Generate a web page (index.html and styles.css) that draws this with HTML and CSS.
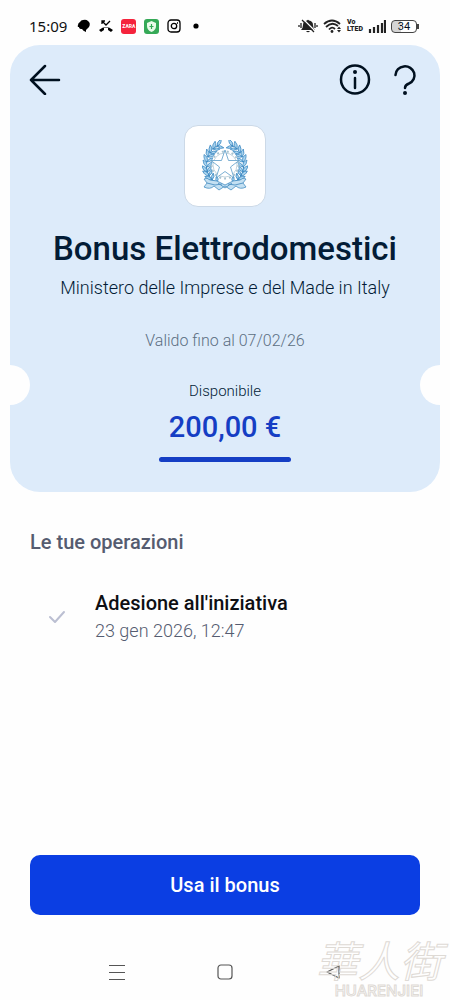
FILE: index.html
```html
<!DOCTYPE html>
<html lang="it">
<head>
    <meta charset="UTF-8">
    <meta name="viewport" content="width=device-width, initial-scale=1.0">
    <title>Bonus Elettrodomestici</title>
    <link rel="stylesheet" href="styles.css">
</head>
<body>
    <div class="status-bar">
        <span class="time">15:09</span>
        <div class="status-left">
            <svg width="14" height="14" viewBox="0 0 14 14"><path d="M3 3Q4 1 6 1Q9 0 11 2Q14 4 12 8Q10 10 9 11L9 13Q6 12 5 10Q2 10 2 8Q0 8 1 6Q1 4 3 3Z"/></svg>
            <svg width="14" height="14" viewBox="0 0 14 14"><path d="M0 11Q7 5 14 11L12 13L9 11V9Q7 8 5 9V11L2 13Z"/><path d="M3 5V2H6M3 2L7 6L11 2" fill="none" stroke="#000" stroke-width="1.3"/></svg>
            <span class="app-icon">ZARA</span>
            <svg width="15" height="15" viewBox="0 0 15 15"><rect width="15" height="15" rx="3" fill="#35a957"/><path d="M7.5 2L12 4V7Q12 11 7.5 13Q3 11 3 7V4Z" fill="#e9fbe9"/><path d="M7.5 5V10M5.5 7.5H9.5" stroke="#35a957" stroke-width="1.2"/></svg>
            <svg width="14" height="14" viewBox="0 0 14 14" fill="none" stroke="#000" stroke-width="1.3"><rect x="1" y="1" width="12" height="12" rx="3"/><circle cx="7" cy="7" r="2.7"/><path d="M10 4H11"/></svg>
            <svg width="14" height="14" viewBox="0 0 14 14"><circle cx="7" cy="7" r="2.6"/></svg>
        </div>
        <div class="status-right">
            <svg width="20" height="14" viewBox="0 0 20 14"><path d="M3 11Q5 9 5 6Q5 2 9 1.500Q10 0 11 1.500Q15 2 15 6Q15 9 17 11ZM8 12H12Q10 14.500 8 12Z" fill="#222"/><path d="M5 0L18 13" stroke="#fff" stroke-width="1.4"/><path d="M4 1L16 13M3 4V9M1 6V8M17 4V9M19 6V8" stroke="#222" stroke-width="1.3"/></svg>
            <svg width="19" height="14" viewBox="0 0 19 14"><path d="M1 5Q9-2 17 5M3 8Q9 2 15 7M6 10.500Q9 7 12 10" fill="none" stroke="#222" stroke-width="1.8"/><circle cx="9" cy="12.500" r="1.4" fill="#222"/><path d="M14 10L16 7.5L18 10ZM14 11L16 13.5L18 11Z" fill="#222"/></svg>
            <span class="volte"><span>Vo</span><span>LTED</span></span>
            <svg width="18" height="13" viewBox="0 0 18 13"><path d="M2 9V13M6 7V13M10 5V13M14 3V13M17 0V13" stroke="#222" stroke-width="2.2"/></svg>
            <span class="battery">34</span>
        </div>
    </div>

    <main>
        <section class="bonus-card">
            <nav class="top-nav">
                <button type="button" class="icon-btn" aria-label="Indietro">
                    <svg width="32" height="32" viewBox="0 0 32 32"><path d="M30 17H2M16 3L2 17L16 31"/></svg>
                </button>
                <button type="button" class="icon-btn push" aria-label="Informazioni">
                    <svg width="32" height="32" viewBox="0 0 32 32"><circle cx="16" cy="16.5" r="14"/><path d="M16 15V25"/><circle class="dot" cx="16" cy="9" r="2"/></svg>
                </button>
                <button type="button" class="icon-btn" aria-label="Aiuto">
                    <svg width="32" height="32" viewBox="0 0 32 32"><path d="M6.5 12A9.5 9 0 1 1 20 20.500Q16 22 16 25"/><circle class="dot" cx="16" cy="30" r="2"/></svg>
                </button>
            </nav>

            <div class="logo">
                <svg width="46" height="52" viewBox="0 0 46 52" fill="none" stroke="#3d86bd">
                    <defs>
                        <path id="leaf" d="M0 0Q-4-2-4-7Q1-5 0 0Q1-4 5-5Q5-1 0 0" fill="#a9d4ef" stroke="#3685c0" stroke-width=".7"/>
                        <g id="branch">
                            <path d="M22 46Q4 41 4 24Q4 10 17 5" stroke-width="1"/>
                            <use href="#leaf" transform="translate(15 6) rotate(60)"/>
                            <use href="#leaf" transform="translate(11 9) rotate(45)"/>
                            <use href="#leaf" transform="translate(8 13) rotate(32)"/>
                            <use href="#leaf" transform="translate(6 17) rotate(20)"/>
                            <use href="#leaf" transform="translate(5 22) rotate(8)"/>
                            <use href="#leaf" transform="translate(5 27)"/>
                            <use href="#leaf" transform="translate(5 32) rotate(-10)"/>
                            <use href="#leaf" transform="translate(7 36) rotate(-22)"/>
                            <use href="#leaf" transform="translate(10 40) rotate(-35)"/>
                            <use href="#leaf" transform="translate(15 43) rotate(-48)"/>
                        </g>
                    </defs>
                    <use href="#branch"/>
                    <use href="#branch" transform="translate(46 0) scale(-1 1)"/>
                    <circle cx="23" cy="25" r="12" stroke="#a9c3d0" stroke-width=".7"/>
                    <circle cx="23" cy="25" r="13.5" stroke="#a9c3d0" stroke-width="2" stroke-dasharray="2 3"/>
                    <path d="M23 10L26.5 20.500H37L28.5 27L32 38L23 31.500L14 38L17.5 27L9 20.500H19.500Z" fill="#fff" stroke="#5a9cc8" stroke-width=".8"/>
                    <path d="M2 39Q5 37 8 40L15 41L23 45L31 41L38 40Q41 37 44 39L41 43L44 47Q38 50 34 46L29 50L23 46L17 50L12 46Q8 50 2 47L5 43Z" fill="#c4e0f2" stroke="#478fc3" stroke-width=".8"/>
                    <path d="M5 43L13 45L20 44M41 43L33 45L26 44M16 43L23 48L30 43" stroke-width=".8"/>
                </svg>
            </div>

            <h1>Bonus Elettrodomestici</h1>
            <p class="issuer">Ministero delle Imprese e del Made in Italy</p>
            <p class="validity">Valido fino al 07/02/26</p>
            <p class="label">Disponibile</p>
            <p class="amount">200,00 €</p>
            <div class="amount-bar"></div>
        </section>

        <section class="operations">
            <h2>Le tue operazioni</h2>
            <div class="operation">
                <svg width="18" height="14" viewBox="0 0 18 14"><path d="M2 7L7 12L16 2" fill="none" stroke="#bbbfd2" stroke-width="2" stroke-linecap="round" stroke-linejoin="round"/></svg>
                <div>
                    <h3>Adesione all'iniziativa</h3>
                    <p>23 gen 2026, 12:47</p>
                </div>
            </div>
        </section>

        <button type="button" class="primary-btn">Usa il bonus</button>
    </main>

    <footer class="system-nav">
        <svg width="16" height="16" viewBox="0 0 16 16"><path d="M0 1.5H16M0 8.5H16M0 15.5H16"/></svg>
        <svg width="16" height="16" viewBox="0 0 16 16"><rect x="1" y="1" width="14" height="14" rx="3"/></svg>
        <svg width="16" height="16" viewBox="0 0 16 16"><path d="M14 2V14L2 8Z"/></svg>
        <div class="watermark">
            <span class="watermark-cn" lang="zh">華人街</span>
            <span class="watermark-en">HUARENJIEI</span>
        </div>
    </footer>
</body>
</html>
```
FILE: styles.css
```css
* {
    box-sizing: border-box;
}

body {
    margin: 0;
    min-height: 100vh;
    display: flex;
    flex-direction: column;
    font-family: Roboto, "Noto Sans", sans-serif;
    background-color: #fefefe;
    color: #00101f;
}

h1, h2, h3, p {
    margin: 0;
}

svg {
    display: block;
    flex-shrink: 0;
}

button {
    font-family: inherit;
    cursor: pointer;
}

/* Status bar */
.status-bar {
    display: flex;
    align-items: center;
    height: 45px;
    padding: 7px 31px 0 29px;
}

.time {
    font-family: "Noto Sans", sans-serif;
    font-size: 15px;
    color: #111;
}

.status-left {
    display: flex;
    align-items: center;
    gap: 8px;
    margin-left: 10px;
}

.status-right {
    display: flex;
    align-items: center;
    gap: 5px;
    margin-left: auto;
}

.app-icon {
    width: 15px;
    height: 15px;
    border-radius: 3px;
    background-color: #f5233c;
    color: #fff;
    font-size: 5px;
    font-weight: bold;
    line-height: 15px;
    text-align: center;
}

.volte {
    display: flex;
    flex-direction: column;
    font-size: 7px;
    font-weight: 900;
    line-height: 7px;
    color: #222;
}

.battery {
    position: relative;
    width: 26px;
    height: 13px;
    margin-right: 2px;
    border: 1px solid #444;
    border-radius: 4px;
    background: linear-gradient(to right, #d5d5d5 36%, #fff 36%);
    font-size: 11px;
    line-height: 12px;
    text-align: center;
}

.battery::after {
    content: "";
    position: absolute;
    top: 3px;
    right: -3px;
    width: 2px;
    height: 5px;
    background-color: #444;
}

/* Bonus card */
main {
    display: flex;
    flex: 1;
    flex-direction: column;
}

.bonus-card {
    position: relative;
    display: flex;
    flex-direction: column;
    align-items: center;
    margin: 0 10px;
    padding: 18px 19px 30px;
    border-radius: 30px;
    background-color: #ddebfa;
    text-align: center;
}

/* Ticket notches */
.bonus-card::before,
.bonus-card::after {
    content: "";
    position: absolute;
    top: 320px;
    width: 20px;
    height: 40px;
    background-color: #fefefe;
}

.bonus-card::before {
    left: 0;
    border-radius: 0 20px 20px 0;
}

.bonus-card::after {
    right: 0;
    border-radius: 20px 0 0 20px;
}

.top-nav {
    display: flex;
    align-self: stretch;
    gap: 18px;
}

.icon-btn {
    padding: 0;
    border: none;
    background: none;
}

.icon-btn svg {
    fill: none;
    stroke: #00101f;
    stroke-width: 2.5;
    stroke-linecap: round;
    stroke-linejoin: round;
}

.icon-btn .dot {
    fill: #00101f;
    stroke: none;
}

.push {
    margin-left: auto;
}

.logo {
    display: flex;
    align-items: center;
    justify-content: center;
    width: 82px;
    height: 82px;
    margin-top: 30px;
    border: 1px solid #ccd9e7;
    border-radius: 14px;
    background-color: #fff;
}

h1 {
    margin-top: 20px;
    font-size: 33px;
    font-weight: 500;
    line-height: 44px;
    color: #031c36;
}

.issuer {
    margin-top: 4px;
    font-size: 18px;
    font-weight: 300;
    line-height: 26px;
    color: #031c36;
}

.validity {
    margin-top: 30px;
    font-size: 16px;
    font-weight: 300;
    line-height: 20px;
    color: #5c6f82;
}

.label {
    margin-top: 30px;
    font-size: 15px;
    font-weight: 300;
    line-height: 20px;
    color: #031c36;
}

.amount {
    margin-top: 8px;
    font-size: 29px;
    font-weight: 500;
    line-height: 36px;
    color: #153ec4;
}

.amount-bar {
    width: 132px;
    height: 5px;
    margin-top: 12px;
    border-radius: 3px;
    background-color: #153ec4;
}

/* Operations */
.operations {
    padding: 37px 30px;
}

h2 {
    font-size: 20px;
    font-weight: 500;
    line-height: 26px;
    color: #555c70;
}

.operation {
    display: flex;
    align-items: center;
    gap: 29px;
    margin-top: 34px;
    padding-left: 18px;
}

h3 {
    font-size: 20px;
    font-weight: 500;
    line-height: 28px;
    color: #0e0f13;
}

.operation p {
    font-size: 18px;
    font-weight: 300;
    line-height: 28px;
    color: #555c70;
}

.primary-btn {
    height: 60px;
    margin: auto 30px 0;
    border: none;
    border-radius: 10px;
    background-color: #0b3ee3;
    color: #fff;
    font-size: 20px;
    font-weight: 500;
}

/* System navigation */
.system-nav {
    position: relative;
    display: flex;
    align-items: center;
    justify-content: center;
    gap: 92px;
    height: 85px;
    padding-top: 29px;
}

.system-nav svg {
    fill: none;
    stroke: #555;
    stroke-width: 1.2;
    stroke-linejoin: round;
}

.watermark {
    position: absolute;
    right: 8px;
    bottom: 2px;
    display: flex;
    flex-direction: column;
    align-items: center;
    color: transparent;
    -webkit-text-stroke: 1px #dedad5;
}

.watermark-cn {
    font-family: "Noto Sans CJK TC", sans-serif;
    font-size: 42px;
    font-style: italic;
    line-height: 50px;
}

.watermark-en {
    font-family: Inter, sans-serif;
    font-size: 15px;
    font-weight: 500;
    line-height: 14px;
}
```
